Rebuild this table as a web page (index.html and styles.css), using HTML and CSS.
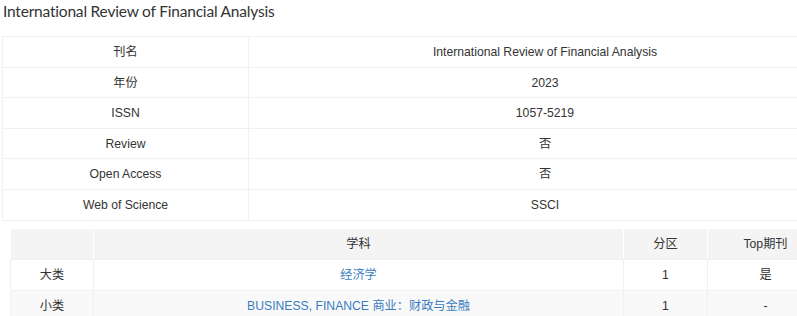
FILE: index.html
```html
<!DOCTYPE html>
<html lang="zh">
<head>
<meta charset="utf-8">
<title>International Review of Financial Analysis</title>
<link rel="stylesheet" href="styles.css">
</head>
<body>
<div class="page">
  <h3 class="journal-title">International Review of Financial Analysis</h3>
  <table class="info-table">
    <colgroup><col class="c-label"><col class="c-value"></colgroup>
    <tbody>
      <tr><td>刊名</td><td>International Review of Financial Analysis</td></tr>
      <tr><td>年份</td><td>2023</td></tr>
      <tr><td>ISSN</td><td>1057-5219</td></tr>
      <tr><td>Review</td><td>否</td></tr>
      <tr><td>Open Access</td><td>否</td></tr>
      <tr><td>Web of Science</td><td>SSCI</td></tr>
    </tbody>
  </table>
  <table class="zone-table">
    <colgroup><col class="z1"><col class="z2"><col class="z3"><col class="z4"></colgroup>
    <thead>
      <tr><th></th><th>学科</th><th>分区</th><th>Top期刊</th></tr>
    </thead>
    <tbody>
      <tr><td>大类</td><td><a href="#">经济学</a></td><td>1</td><td>是</td></tr>
      <tr class="alt"><td>小类</td><td><a href="#">BUSINESS, FINANCE 商业：财政与金融</a></td><td>1</td><td>-</td></tr>
    </tbody>
  </table>
</div>
</body>
</html>
```
FILE: styles.css
```css
html, body {
  margin: 0;
  padding: 0;
  overflow: hidden;
  background: #fff;
}
.page {
  width: 900px;
  font-family: "Liberation Sans", Arial, "Noto Sans CJK SC", sans-serif;
  font-size: 12.2px;
  color: #333;
}
.journal-title {
  margin: 0;
  padding: 1px 0 0 3px;
  height: 34px;
  box-sizing: border-box;
  font-family: Lato, "Noto Sans CJK SC", sans-serif;
  font-weight: normal;
  font-size: 15.5px;
  letter-spacing: -0.2px;
  line-height: 20px;
  color: #333;
}
table {
  border-collapse: collapse;
  table-layout: fixed;
}
td, th {
  text-align: center;
  padding: 7px 4px 5px;
  line-height: 17.6px;
  font-weight: normal;
}
.info-table {
  margin-left: 2px;
  margin-top: 2px;
  width: 840px;
}
.info-table td {
  border: 1px solid #f1f1f1;
}
.c-label { width: 246px; }
.zone-table {
  margin-left: 10px;
  margin-top: 7px;
  width: 813px;
}
.zone-table th {
  background: #f4f4f4;
  border: 1px solid #fff;
  border-bottom: 1px solid #f0f0f0;
  padding: 7px 4px 6px;
}
.zone-table td {
  border: 1px solid #f0f0f0;
}
.zone-table tr.alt td { background: #f9f9f9; }
.z1 { width: 83px; }
.z2 { width: 530px; }
.z3 { width: 84px; }
.z4 { width: 116px; }
a {
  color: #3a7cc1;
  text-decoration: none;
}
```
